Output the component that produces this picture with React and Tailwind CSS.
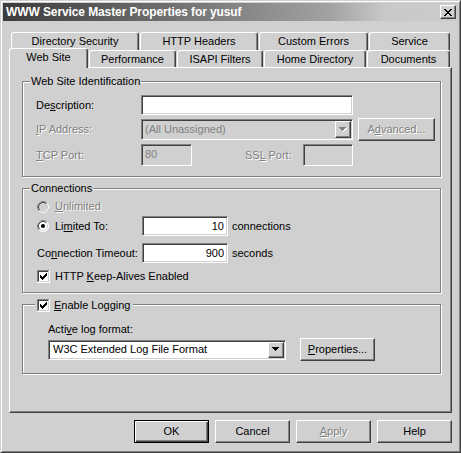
import React from "react";

const raised =
  "border border-t-white border-l-white border-r-[#404040] border-b-[#404040] shadow-[inset_-1px_-1px_0_#808080]";
const sunken =
  "border border-t-[#808080] border-l-[#808080] border-r-white border-b-white shadow-[inset_1px_1px_0_#404040,inset_-1px_-1px_0_#d0d0d0]";
const groupBox =
  "border border-[#808080] shadow-[1px_1px_0_#fff,inset_1px_1px_0_#fff] flex flex-col";
const dim = "text-[#808080] [text-shadow:1px_1px_0_#fff]";

function U({ children }) {
  return <span className="underline underline-offset-[1px]">{children}</span>;
}

function Arrow({ disabled }) {
  const d = "M0 0h7v1H0z M1 1h5v1H1z M2 2h3v1H2z M3 3h1v1H3z";
  return (
    <svg width="8" height="5" viewBox="0 0 8 5" shapeRendering="crispEdges">
      {disabled && <path d={d} fill="#fff" transform="translate(1 1)" />}
      <path d={d} fill={disabled ? "#808080" : "#000"} />
    </svg>
  );
}

function Radio({ checked, disabled }) {
  return (
    <svg width="12" height="12" viewBox="0 0 12 12" className="shrink-0">
      <circle cx="6" cy="6" r="5.5" fill={disabled ? "#d0d0d0" : "#fff"} />
      <path d="M2.11 9.89 A5.5 5.5 0 0 1 9.89 2.11" stroke="#808080" fill="none" />
      <path d="M9.89 2.11 A5.5 5.5 0 0 1 2.11 9.89" stroke="#fff" fill="none" />
      <path d="M2.82 9.18 A4.5 4.5 0 0 1 9.18 2.82" stroke="#404040" fill="none" />
      <path d="M9.18 2.82 A4.5 4.5 0 0 1 2.82 9.18" stroke="#d0d0d0" fill="none" />
      {checked && <circle cx="6" cy="6" r="2" fill="#000" />}
    </svg>
  );
}

function Check() {
  return (
    <svg width="13" height="13" viewBox="0 0 13 13" shapeRendering="crispEdges" className="shrink-0">
      <rect width="13" height="13" fill="#fff" />
      <path d="M0 0h12v1H0z M0 0h1v12H0z" fill="#808080" />
      <path d="M12 0h1v13h-1z M0 12h13v1H0z" fill="#fff" />
      <path d="M1 1h10v1H1z M1 1h1v10H1z" fill="#404040" />
      <path d="M11 1h1v11h-1z M1 11h11v1H1z" fill="#d0d0d0" />
      <path
        d="M3 5h1v3H3z M4 6h1v3H4z M5 7h1v3H5z M6 6h1v3H6z M7 5h1v3H7z M8 4h1v3H8z M9 3h1v3H9z"
        fill="#000"
      />
    </svg>
  );
}

function Tab({ w, selected, children }) {
  return (
    <div
      className={`${w} ${
        selected ? "relative z-10 -mt-[2px] h-[20px] pb-[2px]" : "h-full"
      } flex items-center justify-center rounded-t-[3px] border-l border-t border-r border-l-white border-t-white border-r-[#404040] bg-[#d0d0d0] shadow-[inset_-1px_0_0_#808080]`}
    >
      {children}
    </div>
  );
}

function Button({ w = "w-[75px]", children, isDefault, className = "" }) {
  return (
    <div
      className={`${w} h-[23px] flex items-center justify-center ${
        isDefault
          ? "border border-black shadow-[inset_1px_1px_0_#fff,inset_-1px_-1px_0_#404040,inset_-2px_-2px_0_#808080]"
          : raised
      } ${className}`}
    >
      {children}
    </div>
  );
}

export default function App() {
  return (
    <div className="w-[461px] h-[453px] bg-[#d0d0d0] border border-t-[#d0d0d0] border-l-[#d0d0d0] border-r-[#404040] border-b-[#404040] shadow-[inset_1px_1px_0_#fff,inset_-1px_-1px_0_#808080] p-[2px] flex flex-col font-['Liberation_Sans',Arial,sans-serif] text-[11px] leading-[13px] text-black select-none">
      {/* Title bar */}
      <div className="h-[18px] flex items-center justify-between bg-[linear-gradient(to_right,#3c3c3c_0%,#a2a2a2_72%,#c9c9c9_84%,#cbcbcb_100%)]">
        <span className="pl-[3px] text-[12px] font-bold tracking-[-0.1px] text-white">
          WWW Service Master Properties for yusuf
        </span>
        <div className={`mr-[2px] w-[16px] h-[14px] bg-[#d0d0d0] flex items-center justify-center ${raised}`}>
          <svg width="8" height="7" viewBox="0 0 8 7" shapeRendering="crispEdges">
            <path
              d="M0 0h2v1H0z M6 0h2v1H6z M1 1h2v1H1z M5 1h2v1H5z M2 2h4v1H2z M3 3h2v1H3z M2 4h4v1H2z M1 5h2v1H1z M5 5h2v1H5z M0 6h2v1H0z M6 6h2v1H6z"
              fill="#000"
            />
          </svg>
        </div>
      </div>

      {/* Tabs */}
      <div className="mt-[11px] ml-[6px] mr-[6px] flex flex-col">
        <div className="flex h-[18px] pl-[2px] gap-[1px]">
          <Tab w="w-[128px]">Directory Security</Tab>
          <Tab w="w-[118px]">HTTP Headers</Tab>
          <Tab w="w-[109px]">Custom Errors</Tab>
          <Tab w="w-[81px]">Service</Tab>
        </div>
        <div className="flex h-[17px] items-start gap-[1px]">
          <Tab w="w-[79px]" selected>
            Web Site
          </Tab>
          <Tab w="w-[87px]">Performance</Tab>
          <Tab w="w-[86px]">ISAPI Filters</Tab>
          <Tab w="w-[102px]">Home Directory</Tab>
          <Tab w="w-[83px]">Documents</Tab>
        </div>

        {/* Panel */}
        <div className={`h-[346px] flex flex-col ${raised}`}>
          {/* Web Site Identification */}
          <div className={`mt-[13px] ml-[12px] w-[419px] h-[96px] ${groupBox}`}>
            <div className="-mt-[7px] ml-[7px] w-fit px-[1px] bg-[#d0d0d0]">Web Site Identification</div>
            <div className="mt-[7px] pl-[13px] flex items-center h-[20px]">
              <span className="w-[105px]">
                De<U>s</U>cription:
              </span>
              <div className={`w-[212px] h-[20px] bg-white ${sunken}`} />
            </div>
            <div className="mt-[3px] pl-[13px] flex items-center h-[23px]">
              <span className={`w-[105px] ${dim}`}>
                <U>I</U>P Address:
              </span>
              <div className={`w-[212px] h-[21px] p-[1px] flex ${sunken}`}>
                <span className="flex-1 pl-[2px] flex items-center text-[#808080]">(All Unassigned)</span>
                <div className={`w-[16px] h-full flex items-center justify-center ${raised}`}>
                  <Arrow disabled />
                </div>
              </div>
              <Button w="w-[77px]" className={`ml-[5px] ${dim}`}>
                A<U>d</U>vanced...
              </Button>
            </div>
            <div className="mt-[3px] pl-[13px] flex items-center h-[22px]">
              <span className={`w-[105px] ${dim}`}>
                <U>T</U>CP Port:
              </span>
              <div className={`w-[51px] h-[22px] pl-[3px] pt-[3px] text-[#808080] ${sunken}`}>80</div>
              <span className={`ml-[53px] w-[58px] ${dim}`}>
                SS<U>L</U> Port:
              </span>
              <div className={`w-[50px] h-[22px] ${sunken}`} />
            </div>
          </div>

          {/* Connections */}
          <div className={`mt-[11px] ml-[12px] w-[419px] h-[105px] ${groupBox}`}>
            <div className="-mt-[7px] ml-[7px] w-fit px-[1px] bg-[#d0d0d0]">Connections</div>
            <div className="mt-[5px] pl-[14px] flex items-center gap-[6px] h-[13px]">
              <Radio disabled />
              <span className={dim}>
                <U>U</U>nlimited
              </span>
            </div>
            <div className="mt-[3px] pl-[14px] flex items-center h-[20px]">
              <div className="w-[105px] flex items-center gap-[6px]">
                <Radio checked />
                <span>
                  Li<U>m</U>ited To:
                </span>
              </div>
              <div className={`w-[86px] h-[20px] bg-white pr-[3px] pt-[3px] text-right ${sunken}`}>10</div>
              <span className="ml-[4px]">connections</span>
            </div>
            <div className="mt-[7px] pl-[14px] flex items-center h-[20px]">
              <span className="w-[105px]">
                Co<U>n</U>nection Timeout:
              </span>
              <div className={`w-[86px] h-[20px] bg-white pr-[3px] pt-[3px] text-right ${sunken}`}>900</div>
              <span className="ml-[4px]">seconds</span>
            </div>
            <div className="mt-[7px] pl-[14px] flex items-center gap-[5px] h-[13px]">
              <Check />
              <span>
                HTTP <U>K</U>eep-Alives Enabled
              </span>
            </div>
          </div>

          {/* Logging */}
          <div className={`mt-[11px] ml-[12px] w-[419px] h-[70px] ${groupBox}`}>
            <div className="-mt-[6px] ml-[12px] w-fit pl-[2px] pr-[3px] bg-[#d0d0d0] flex items-center gap-[4px]">
              <Check />
              <span>
                <U>E</U>nable Logging
              </span>
            </div>
            <div className="mt-[11px] ml-[25px]">
              Acti<U>v</U>e log format:
            </div>
            <div className="mt-[2px] ml-[25px] flex items-center h-[23px]">
              <div className={`w-[238px] h-[20px] p-[1px] flex bg-white ${sunken}`}>
                <span className="flex-1 pl-[3px] flex items-center">W3C Extended Log File Format</span>
                <div className={`w-[16px] h-full bg-[#d0d0d0] flex items-center justify-center ${raised}`}>
                  <Arrow />
                </div>
              </div>
              <Button className="ml-[14px]">
                <U>P</U>roperties...
              </Button>
            </div>
          </div>
        </div>
      </div>

      {/* Dialog buttons */}
      <div className="mt-[7px] pr-[6px] flex justify-end gap-[6px]">
        <Button isDefault>OK</Button>
        <Button>Cancel</Button>
        <Button className={dim}>
          <U>A</U>pply
        </Button>
        <Button>Help</Button>
      </div>
    </div>
  );
}
